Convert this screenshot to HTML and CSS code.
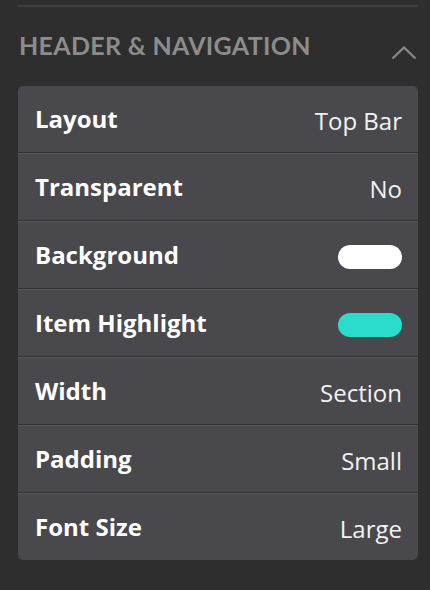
FILE: index.html
```html
<!DOCTYPE html>
<html>
<head>
<meta charset="utf-8">
<link rel="stylesheet" href="styles.css">
</head>
<body>
<div class="panel">
  <div class="rule"></div>
  <div class="section-head">
    <span class="section-title">HEADER &amp; NAVIGATION</span>
    <svg class="chev" width="26" height="14" viewBox="0 0 26 14"><path d="M1.5 12.5 L13 1.5 L24.5 12.5" fill="none" stroke="#8a8a8a" stroke-width="2.2"/></svg>
  </div>
  <div class="card">
    <div class="row"><span class="label">Layout</span><span class="value">Top Bar</span></div>
    <div class="row"><span class="label">Transparent</span><span class="value">No</span></div>
    <div class="row"><span class="label">Background</span><span class="pill white"></span></div>
    <div class="row"><span class="label">Item Highlight</span><span class="pill teal"></span></div>
    <div class="row"><span class="label">Width</span><span class="value">Section</span></div>
    <div class="row"><span class="label">Padding</span><span class="value">Small</span></div>
    <div class="row"><span class="label">Font Size</span><span class="value">Large</span></div>
  </div>
</div>
</body>
</html>
```
FILE: styles.css
```css
html, body {
  margin: 0;
  padding: 0;
  background: #2e2e2e;
  width: 430px;
  height: 590px;
  overflow: hidden;
}
.panel {
  padding: 5px 12px 0 18px;
}
.rule {
  height: 2px;
  background: #3f3f3f;
}
.section-head {
  display: flex;
  justify-content: space-between;
  align-items: center;
  height: 79px;
  padding-left: 1px;
}
.section-title {
  font-family: "Lato", sans-serif;
  font-weight: 700;
  font-size: 25px;
  color: #8c8c8c;
  letter-spacing: 0.3px;
  margin-top: -3px;
}
.chev {
  margin-right: 1px;
  margin-top: 12px;
}
.card {
  background: #49484d;
  border-radius: 5px;
  overflow: hidden;
}
.row {
  height: 66px;
  display: flex;
  justify-content: space-between;
  align-items: center;
  padding: 0 16px 0 17px;
  border-top: 1px solid #57565b;
  border-bottom: 1px solid #333236;
}
.row:first-child { border-top: none; }
.row:last-child { border-bottom: none; }
.label {
  font-family: "Open Sans", sans-serif;
  font-weight: 700;
  font-size: 24px;
  color: #ffffff;
  margin-top: -2px;
}
.value {
  font-family: "Open Sans", sans-serif;
  font-weight: 400;
  font-size: 24px;
  color: #f2f2f2;
  margin-top: 2px;
}
.pill {
  width: 64px;
  height: 24px;
  border-radius: 12px;
  margin-top: 4px;
}
.pill.white { background: #ffffff; }
.pill.teal { background: #29dccb; }
```
